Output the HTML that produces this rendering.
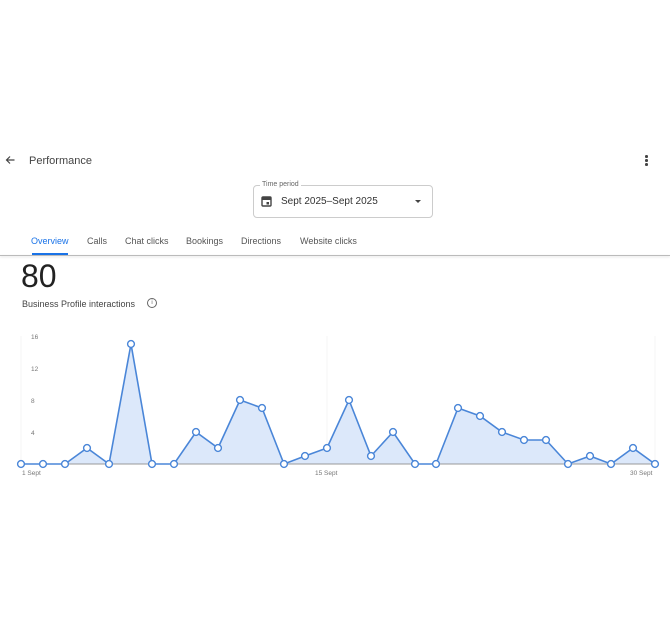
<!DOCTYPE html>
<html><head><meta charset="utf-8"><style>
body{margin:0;width:670px;height:629px;background:#fff;font-family:"Liberation Sans",Arial,sans-serif;position:relative;overflow:hidden}
.a{position:absolute;white-space:nowrap}
</style></head><body>
<svg class="a" style="left:4px;top:154px" width="13" height="12" viewBox="0 0 24 24"><path d="M20 12H5M11 5l-7 7 7 7" fill="none" stroke="#444" stroke-width="2.4"/></svg>
<div class="a" style="left:29px;top:155px;font-size:11px;color:#444">Performance</div>
<div class="a" style="left:645px;top:155px;width:3px;height:11px">
<div style="width:2.5px;height:2.5px;background:#444;border-radius:50%;margin-bottom:1.5px"></div><div style="width:2.5px;height:2.5px;background:#444;border-radius:50%;margin-bottom:1.5px"></div><div style="width:2.5px;height:2.5px;background:#444;border-radius:50%"></div></div>
<div class="a" style="left:253px;top:185px;width:178px;height:31px;border:1px solid #ccc;border-radius:4px"></div>
<div class="a" style="left:260px;top:181px;font-size:7px;color:#666;background:#fff;padding:0 2px">Time period</div>
<svg class="a" style="left:261px;top:195px" width="11" height="12" viewBox="0 0 11 12"><rect x="1" y="2" width="9" height="9" rx="1" fill="none" stroke="#444" stroke-width="1.4"/><rect x="1" y="2" width="9" height="3" fill="#444"/><rect x="5.5" y="7" width="2.5" height="2.5" fill="#444"/></svg>
<div class="a" style="left:281px;top:196px;font-size:10px;color:#333">Sept 2025–Sept 2025</div>
<div class="a" style="left:415px;top:200px;border-left:3px solid transparent;border-right:3px solid transparent;border-top:3px solid #444"></div>
<div class="a" style="left:31px;top:236px;font-size:9px;color:#1a73e8">Overview</div>
<div class="a" style="left:32px;top:253px;width:36px;height:2px;background:#1a73e8"></div>
<div class="a" style="left:87px;top:236px;font-size:9px;color:#555">Calls</div>
<div class="a" style="left:125px;top:236px;font-size:9px;color:#555">Chat clicks</div>
<div class="a" style="left:186px;top:236px;font-size:9px;color:#555">Bookings</div>
<div class="a" style="left:241px;top:236px;font-size:9px;color:#555">Directions</div>
<div class="a" style="left:300px;top:236px;font-size:9px;color:#555">Website clicks</div>
<div class="a" style="left:0;top:255px;width:670px;height:1px;background:#bbb;box-shadow:0 1px 2px rgba(0,0,0,.15)"></div>
<div class="a" style="left:21px;top:258px;font-size:32px;color:#222">80</div>
<div class="a" style="left:22px;top:299px;font-size:9px;color:#444">Business Profile interactions</div>
<div class="a" style="left:147px;top:298px;width:8px;height:8px;border:1px solid #666;border-radius:50%;font-size:6px;text-align:center;line-height:8px;color:#666">i</div>
<svg class="a" style="left:0;top:0" width="670" height="629">
<line x1="21" y1="336" x2="21" y2="464" stroke="#f5f5f5"/>
<line x1="327" y1="336" x2="327" y2="464" stroke="#f5f5f5"/>
<line x1="655" y1="336" x2="655" y2="464" stroke="#f5f5f5"/>
<g font-family="Liberation Sans,Arial,sans-serif" font-size="6.5" fill="#777">
<text x="31" y="339">16</text><text x="31" y="371">12</text><text x="31" y="403">8</text><text x="31" y="435">4</text>
<text x="22" y="475">1 Sept</text><text x="315" y="475">15 Sept</text><text x="630" y="475">30 Sept</text></g>
<polygon fill="#dce8fa" points="21,464 43,464 65,464 87,448 109,464 131,344 152,464 174,464 196,432 218,448 240,400 262,408 284,464 305,456 327,448 349,400 371,456 393,432 415,464 436,464 458,408 480,416 502,432 524,440 546,440 568,464 590,456 611,464 633,448 655,464"/>
<line x1="21" y1="464" x2="655" y2="464" stroke="#999"/>
<polyline fill="none" stroke="#4a86d8" stroke-width="1.6" points="21,464 43,464 65,464 87,448 109,464 131,344 152,464 174,464 196,432 218,448 240,400 262,408 284,464 305,456 327,448 349,400 371,456 393,432 415,464 436,464 458,408 480,416 502,432 524,440 546,440 568,464 590,456 611,464 633,448 655,464"/>
<g fill="#fff" stroke="#4a86d8" stroke-width="1.4">
<circle cx="21" cy="464" r="3.4"/><circle cx="43" cy="464" r="3.4"/><circle cx="65" cy="464" r="3.4"/><circle cx="87" cy="448" r="3.4"/><circle cx="109" cy="464" r="3.4"/><circle cx="131" cy="344" r="3.4"/><circle cx="152" cy="464" r="3.4"/><circle cx="174" cy="464" r="3.4"/><circle cx="196" cy="432" r="3.4"/><circle cx="218" cy="448" r="3.4"/><circle cx="240" cy="400" r="3.4"/><circle cx="262" cy="408" r="3.4"/><circle cx="284" cy="464" r="3.4"/><circle cx="305" cy="456" r="3.4"/><circle cx="327" cy="448" r="3.4"/><circle cx="349" cy="400" r="3.4"/><circle cx="371" cy="456" r="3.4"/><circle cx="393" cy="432" r="3.4"/><circle cx="415" cy="464" r="3.4"/><circle cx="436" cy="464" r="3.4"/><circle cx="458" cy="408" r="3.4"/><circle cx="480" cy="416" r="3.4"/><circle cx="502" cy="432" r="3.4"/><circle cx="524" cy="440" r="3.4"/><circle cx="546" cy="440" r="3.4"/><circle cx="568" cy="464" r="3.4"/><circle cx="590" cy="456" r="3.4"/><circle cx="611" cy="464" r="3.4"/><circle cx="633" cy="448" r="3.4"/><circle cx="655" cy="464" r="3.4"/>
</g></svg>
</body></html>
